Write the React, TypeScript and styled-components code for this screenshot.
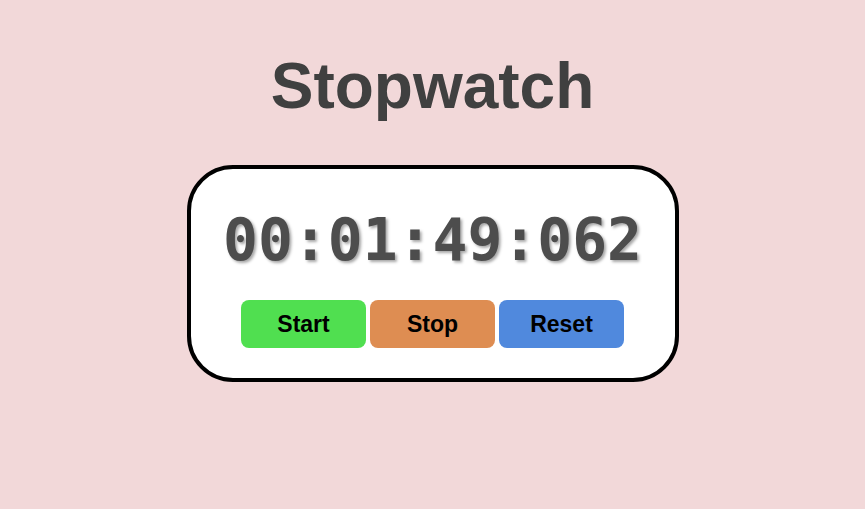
import styled, { createGlobalStyle } from "styled-components";

const GlobalStyle = createGlobalStyle`
  body {
    margin: 0;
    background: #f2d8d9;
    font-family: "Liberation Sans", Arial, sans-serif;
  }
`;

const Page = styled.div`
  display: flex;
  flex-direction: column;
  align-items: center;
  padding-top: 49px;
`;

const Title = styled.h1`
  margin: 0 0 42px;
  font-size: 64px;
  font-weight: 700;
  color: #404040;
`;

const Card = styled.div`
  width: 484px;
  box-sizing: border-box;
  width: 492px;
  height: 217px;
  border: 4px solid #000;
  border-radius: 46px;
  background: #fff;
  display: flex;
  flex-direction: column;
  align-items: center;
  padding-top: 37px;
`;

const Time = styled.div`
  font-family: "DejaVu Sans Mono", monospace;
  font-weight: 700;
  font-size: 58px;
  color: #4d4d4d;
  text-shadow: 2px 2px 3px rgba(0, 0, 0, 0.35);
  margin-bottom: 26px;
`;

const Buttons = styled.div`
  display: flex;
  gap: 4px;
`;

const Button = styled.button<{ $bg: string }>`
  width: 125px;
  height: 48px;
  border: none;
  border-radius: 8px;
  background: ${(p) => p.$bg};
  font-family: "Liberation Sans", Arial, sans-serif;
  font-weight: 700;
  font-size: 23px;
  color: #000;
  cursor: pointer;
`;

export default function App() {
  return (
    <>
      <GlobalStyle />
      <Page>
        <Title>Stopwatch</Title>
        <Card>
          <Time>00:01:49:062</Time>
          <Buttons>
            <Button $bg="#50df50">Start</Button>
            <Button $bg="#de8d52">Stop</Button>
            <Button $bg="#5089dd">Reset</Button>
          </Buttons>
        </Card>
      </Page>
    </>
  );
}
